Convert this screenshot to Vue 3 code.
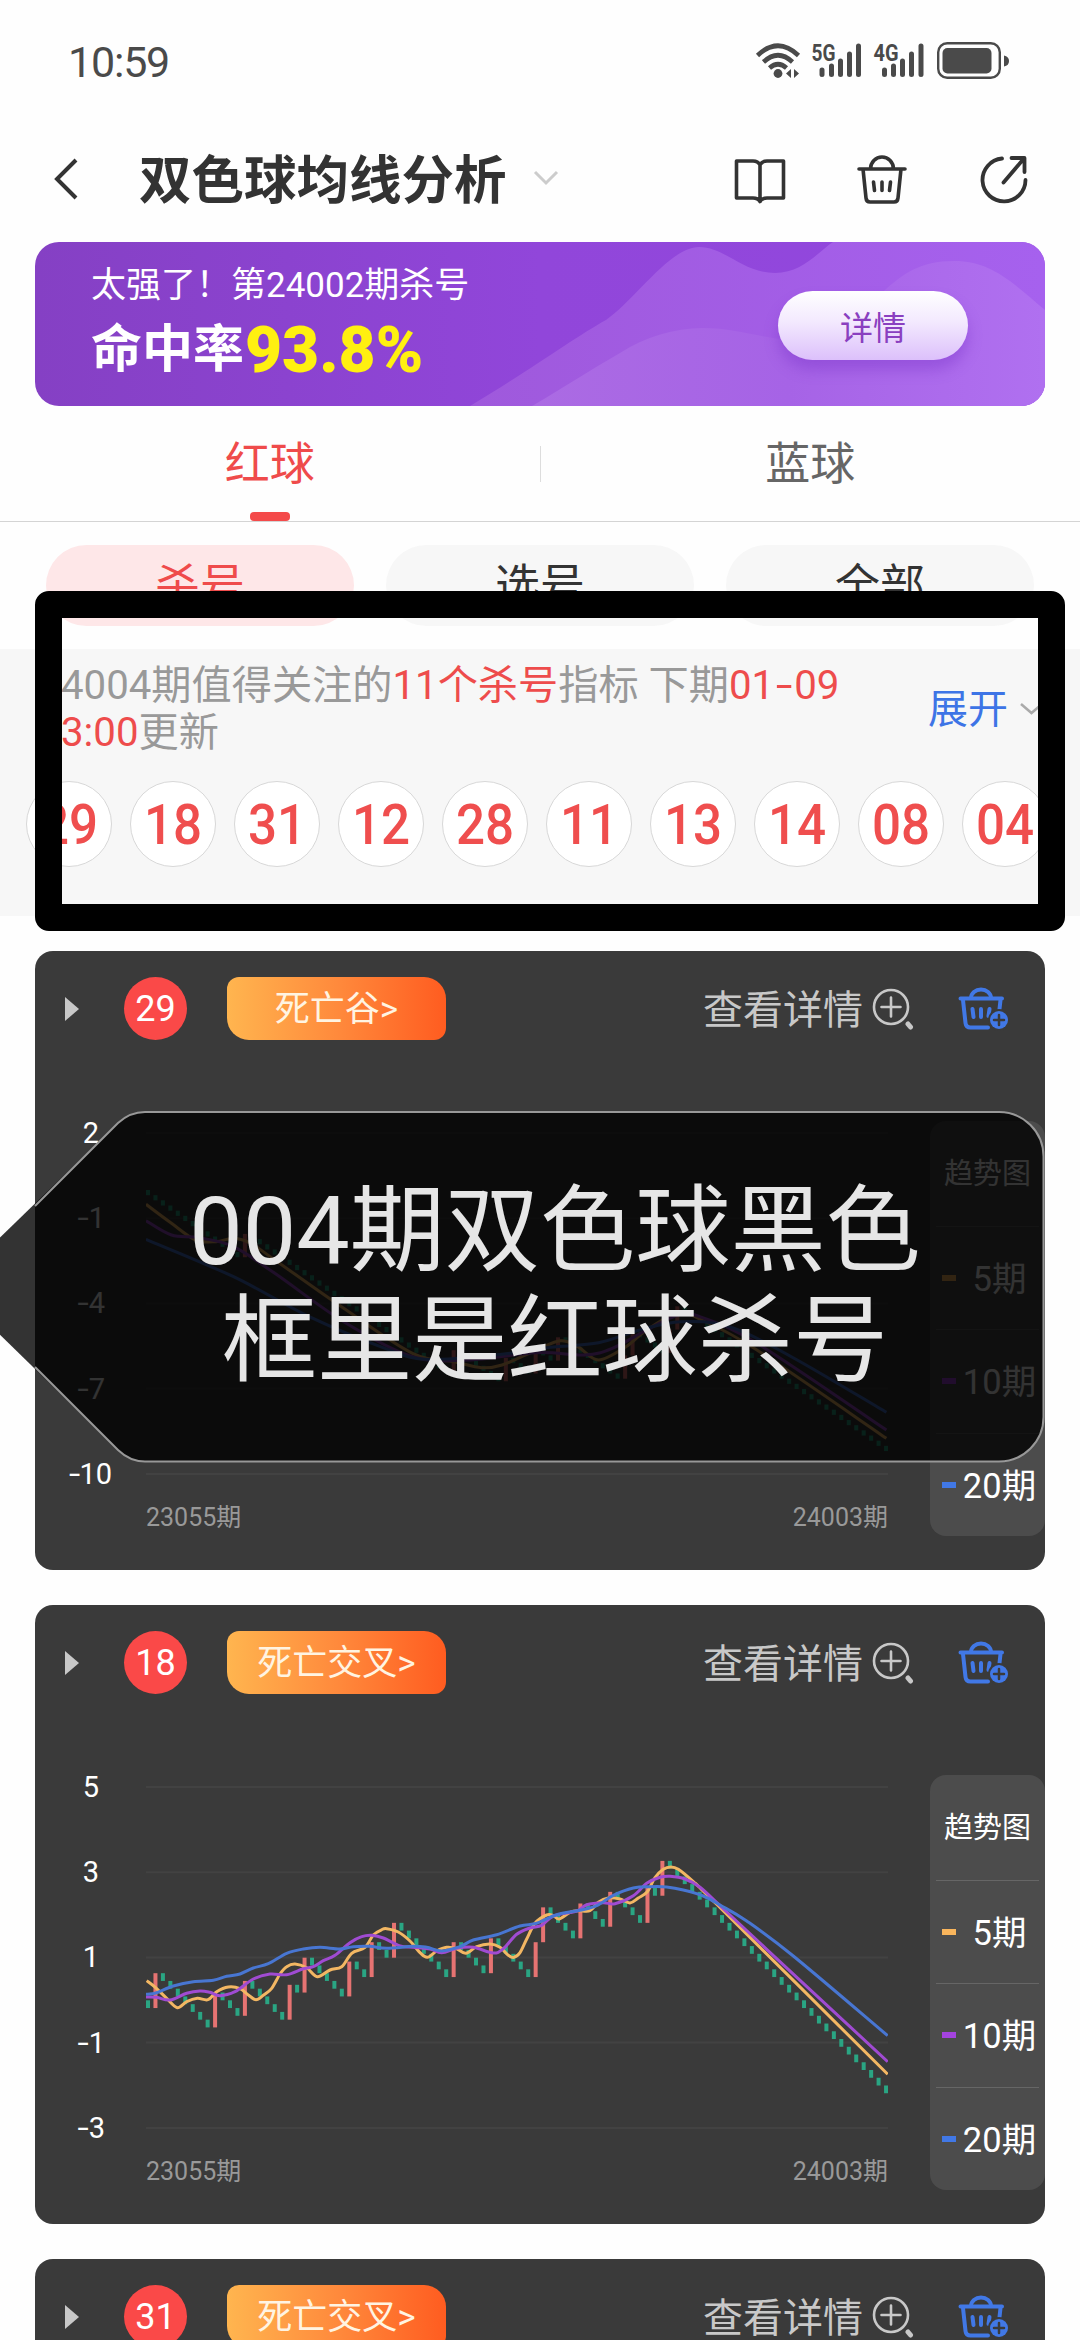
<script setup>
const balls = ['29', '18', '31', '12', '28', '11', '13', '14', '08', '04']

const MISS = 6 / 33
const HIT = 27 / 33
const STEP = 7.455

// Each draw is a bar: a hit climbs by 27/33 of a unit, a miss falls by 6/33.
function buildBars(hits, firstY, unit) {
  const bars = []
  let y = firstY
  for (let i = 0; i < 100; i++) {
    const up = hits.includes(i)
    const h = (up ? HIT : MISS) * unit
    bars.push({ x: i * STEP, y: up ? y - h : y, h, up })
    y += up ? -h : h
  }
  return bars
}

// Catmull-Rom spline through the points
function curve(pts) {
  let d = `M${pts[0][0].toFixed(1)} ${pts[0][1].toFixed(1)}`
  for (let i = 0; i < pts.length - 1; i++) {
    const a = pts[i - 1] || pts[i]
    const b = pts[i]
    const c = pts[i + 1]
    const e = pts[i + 2] || c
    const p = [b[0] + (c[0] - a[0]) / 6, b[1] + (c[1] - a[1]) / 6, c[0] - (e[0] - b[0]) / 6, c[1] - (e[1] - b[1]) / 6, c[0], c[1]]
    d += `C${p.map((n) => n.toFixed(1)).join(' ')}`
  }
  return d
}

const fine = (s) => curve(s.split(' ').map((p) => p.split(',').map(Number)).map(([x, y]) => [(x - 78) / 3, (y - 141) / 3]))
const coarse = (s) => curve(s.split(' ').map((p) => p.split(',').map(Number)).map(([x, y]) => [(x - 213) / 1.452, y / 3 - 33]))

const valley = {
  bars: buildBars([13, 41, 48, 52, 55, 64, 65, 70, 71], 57, 28.43),
  ma5: coarse('213,313 250,370 285,420 315,425 340,415 365,430 400,480 500,625 600,760 660,785 700,803 730,795 780,750 815,722 840,740 870,780 910,740 940,690 985,640 1020,660 1100,750 1288,1015'),
  ma10: coarse('213,362 250,405 290,413 340,440 400,520 500,665 600,770 680,780 780,758 850,765 890,745 940,690 985,645 1010,645 1100,730 1288,990'),
  ma20: coarse('213,418 340,530 450,650 560,745 620,778 720,765 800,742 870,728 930,690 990,665 1060,680 1150,770 1288,937'),
}
const cross = {
  bars: buildBars([1, 9, 13, 19, 21, 27, 30, 33, 41, 46, 52, 53, 58, 62, 67, 69], 213.3, 42.6),
  ma5: fine('80,722 106,742 140,775 172,803 200,785 232,775 264,779 290,755 325,741 360,746 385,765 408,779 430,766 455,745 480,702 500,680 525,672 560,683 592,710 630,690 665,680 695,640 735,622 760,585 785,569 800,566 835,576 870,603 900,638 922,652 950,633 980,622 1010,626 1038,640 1070,620 1110,612 1140,622 1165,646 1182,652 1200,638 1220,597 1245,550 1280,525 1300,527 1318,537 1350,517 1375,512 1410,512 1435,487 1465,474 1500,477 1530,489 1555,474 1582,455 1605,413 1630,388 1652,381 1675,388 1720,425 1790,493 2303,1003'),
  ma10: fine('78,771 110,772 150,780 200,760 240,753 270,757 300,767 345,755 400,717 450,702 500,704 550,686 580,680 610,662 645,646 690,608 725,590 755,586 790,594 840,618 880,622 930,627 965,638 1010,625 1060,622 1120,639 1150,626 1190,583 1230,564 1265,556 1300,528 1370,513 1400,494 1450,488 1485,491 1540,467 1580,430 1620,412 1650,409 1695,417 1740,442 1800,497 1940,628 2303,965'),
  ma20: fine('78,763 110,758 160,738 220,725 280,721 320,709 360,702 400,684 445,671 500,640 550,627 600,622 660,627 700,620 750,619 800,625 880,619 920,622 965,633 1020,620 1060,600 1130,584 1200,558 1250,550 1310,524 1380,511 1430,497 1480,466 1540,444 1590,440 1640,441 1690,450 1750,468 1800,495 1880,543 2020,648 2303,887'),
}

const cards = [
  { no: '29', tag: '死亡谷>', axis: ['2', '-1', '-4', '-7', '-10'], chart: valley },
  { no: '18', tag: '死亡交叉>', axis: ['5', '3', '1', '-1', '-3'], chart: cross },
  { no: '31', tag: '死亡交叉>', axis: [], chart: null },
]
const legend = [
  { label: '5期', color: '#f9b55c' },
  { label: '10期', color: '#a443e0' },
  { label: '20期', color: '#4178e6' },
]
const gridY = [0, 85.2, 170.4, 255.6, 341]
</script>

<template>
  <div class="page">
    <div class="status">
      <span class="clock">10:59</span>
      <svg class="status-icons" width="256" height="40" viewBox="755 41 256 40">
        <g fill="none" stroke="#4a4a4a" stroke-width="4.6">
          <path d="M757.500 55.500Q778 36 798.500 55.500" />
          <path d="M763.500 62Q778 48.500 792.500 62" />
          <path d="M769.500 68Q778 60.500 786.500 68" />
        </g>
        <circle cx="778" cy="73.500" r="4.400" fill="#4a4a4a" />
        <path d="M791 69v9l-5-4.500zM794 69v9l5-4.500z" fill="#4a4a4a" />
        <text class="net" x="811.500" y="60.500" textLength="24" lengthAdjust="spacingAndGlyphs">5G</text>
        <text class="net" x="873.500" y="60.500" textLength="25" lengthAdjust="spacingAndGlyphs">4G</text>
        <g stroke="#4a4a4a" stroke-width="5" stroke-linecap="round">
          <path d="M822 70v4.500M831.500 66v8.500M840.500 61v13.500M849.500 54v20.500M858.500 46v28.500" />
          <path d="M884.500 70v4.500M893.500 66v8.500M902.500 61v13.500M911.500 54v20.500M921 46v28.500" />
        </g>
        <rect x="938.200" y="43.200" width="61.600" height="34.600" rx="9" fill="none" stroke="#4a4a4a" stroke-width="2.400" />
        <rect x="942.500" y="48" width="49" height="25.500" rx="5" fill="#4a4a4a" />
        <path d="M1004 55.500q5 1 5 5.500t-5 5.500z" fill="#4a4a4a" />
      </svg>
    </div>

    <header class="nav">
      <svg class="back" width="26" height="44" viewBox="0 0 26 44"><path d="M23 3L4 22l19 19" fill="none" stroke="#333" stroke-width="4" /></svg>
      <h1>双色球均线分析</h1>
      <svg class="caret" width="26" height="16" viewBox="0 0 26 16"><path d="M2 2l11 11L24 2" fill="none" stroke="#ccc" stroke-width="3" /></svg>
      <div class="nav-icons">
        <svg width="52" height="50" viewBox="0 0 52 50" fill="none" stroke="#333" stroke-width="3.600" stroke-linejoin="round">
          <path d="M26 11Q24 7 19 7H2.500v37H19q5 0 7 3.500Q28 44 33 44h16.500V7H33q-5 0-7 4zV46" />
        </svg>
        <svg width="52" height="50" viewBox="0 0 52 50" fill="none" stroke="#333" stroke-width="3.600" stroke-linecap="round" stroke-linejoin="round">
          <path d="M3 15h46M14.500 15a11.500 12 0 0 1 23 0M7 15l3 29q.4 4 4 4h24q3.600 0 4-4l3-29M17.500 28l1 8.500M26 28v8.500M34.500 28l-1 8.500" />
        </svg>
        <svg width="52" height="50" viewBox="0 0 52 50" fill="none" stroke="#333" stroke-width="3.800" stroke-linecap="round" stroke-linejoin="round">
          <path d="M24 4.500A21.500 21.500 0 1 0 47.500 26M25.500 28.500L45.500 5M33.500 4H46.500V18" />
        </svg>
      </div>
    </header>

    <section class="banner">
      <svg class="waves" width="1010" height="164" viewBox="0 0 1010 164">
        <defs>
          <linearGradient id="w1" x1="0" x2="1"><stop offset="0" stop-color="#9f59dc" /><stop offset="1" stop-color="#a661ee" /></linearGradient>
          <linearGradient id="w2" x1="0" x2="1"><stop offset="0" stop-color="#ab6be3" /><stop offset=".5" stop-color="#a663e6" /><stop offset="1" stop-color="#b070f0" /></linearGradient>
        </defs>
        <path d="M435 164C500 125 540 95 571 78C600 58 635 5 664 5C690 5 708 31 740 31C768 31 785 8 798 0H1010V164Z" fill="url(#w1)" />
        <path d="M497 164C530 145 555 128 585 111C610 95 640 86 667 86C705 86 730 98 760 98C800 98 820 70 850 48C868 32 885 19 919 19C955 19 975 38 1010 68V164Z" fill="url(#w2)" />
      </svg>
      <div class="slogan">
        <p class="line1">太强了！第24002期杀号</p>
        <p class="line2"><span>命中率</span><b>93.8%</b></p>
      </div>
      <button class="detail">详情</button>
    </section>

    <nav class="tabs">
      <div class="tab active">红球<i></i></div>
      <span class="split"></span>
      <div class="tab">蓝球</div>
    </nav>

    <div class="pills">
      <span class="pill on">杀号</span>
      <span class="pill">选号</span>
      <span class="pill">全部</span>
    </div>

    <section class="picks">
      <div class="notice">
        <p>4004期值得关注的<em>11个杀号</em>指标 下期<em>01<span class="dash">-</span>09</em><br /><em>3:00</em>更新</p>
        <span class="expand">展开</span>
        <svg width="24" height="14" viewBox="0 0 24 14"><path d="M1 2l10.500 9L22 2" fill="none" stroke="#aaa" stroke-width="2.500" /></svg>
      </div>
      <div class="balls">
        <span v-for="b in balls" :key="b" class="ball"><b>{{ b }}</b></span>
      </div>
    </section>

    <article v-for="card in cards" :key="card.no" class="card">
      <div class="card-head">
        <svg class="play" width="14" height="24" viewBox="0 0 14 24"><path d="M0 0l14 12L0 24z" fill="#c8c8c8" /></svg>
        <span class="num">{{ card.no }}</span>
        <span class="tag">{{ card.tag }}</span>
        <span class="more">查看详情</span>
        <svg class="mag" width="42" height="44" viewBox="0 0 42 44" fill="none" stroke="#c8c8c8" stroke-width="2.600" stroke-linecap="round">
          <circle cx="19" cy="20" r="17" /><path d="M19 10.500v19M9.500 20h19" /><path d="M36 37l2.500 3" stroke-width="5" />
        </svg>
        <svg class="cart" width="52" height="44" viewBox="0 0 52 44" fill="none" stroke="#4178e6" stroke-width="4" stroke-linecap="round" stroke-linejoin="round">
          <path d="M2.500 11.500H44M13 11a10 8.500 0 0 1 20 0M5 13l2.500 23q.5 4.500 5 4.500H30M42.500 13l-1 9M14.500 22l1 8M23 22v8M31.500 22l-1 7" />
          <circle cx="41" cy="33" r="11" fill="#3a3a3a" stroke="none" />
          <circle cx="41" cy="33" r="9" fill="#4178e6" stroke="none" />
          <path d="M41 28v10M36 33h10" stroke="#3a3a3a" stroke-width="2.500" />
        </svg>
      </div>
      <div v-if="card.chart" class="card-body">
        <div class="axis"><span v-for="a in card.axis" :key="a"><u v-if="a[0] === '-'">-</u>{{ a.replace('-', '') }}</span></div>
        <div class="plot">
          <svg width="742" height="344" viewBox="0 -1 742 344">
            <path v-for="y in gridY" :key="y" :d="`M0 ${y}H742`" stroke="#424242" stroke-width="2" />
            <rect v-for="bar in card.chart.bars" :key="bar.x" :x="bar.x" :y="bar.y" width="4" :height="bar.h" :fill="bar.up ? '#e67372' : '#2aa583'" />
            <g fill="none" stroke-width="3">
              <path :d="card.chart.ma5" stroke="#f3b763" />
              <path :d="card.chart.ma10" stroke="#a04bd2" />
              <path :d="card.chart.ma20" stroke="#4876d2" />
            </g>
          </svg>
          <div class="range"><span>23055期</span><span>24003期</span></div>
        </div>
        <div class="legend">
          <div class="row title">趋势图</div>
          <div v-for="l in legend" :key="l.label" class="row"><i :style="{ background: l.color }"></i><span>{{ l.label }}</span></div>
        </div>
      </div>
    </article>

    <div class="frame"></div>

    <div class="callout">
      <svg width="1080" height="360" viewBox="0 1107 1080 360">
        <path d="M-50 1286L118 1123Q130 1112 145 1112H999A44.500 44.500 0 0 1 1043.500 1156.500V1417A44.500 44.500 0 0 1 999 1461.500H145Q130 1461.500 118 1450Z" fill="#000" fill-opacity=".8" />
        <path d="M35 1206L118 1123Q130 1112 145 1112H999A44.500 44.500 0 0 1 1043.500 1156.500V1417A44.500 44.500 0 0 1 999 1461.500H145Q130 1461.500 118 1450L35 1367" fill="none" stroke="#989898" stroke-width="2" />
      </svg>
      <p>004期双色球黑色<br />框里是红球杀号</p>
    </div>
  </div>
</template>

<style>
body {
  margin: 0;
  background: #fff;
}
</style>

<style scoped>
.page {
  position: relative;
  width: 1080px;
  height: 2340px;
  overflow: hidden;
  background: #fefefe;
  font-family: Roboto, 'Noto Sans CJK SC', sans-serif;
  color: #333;
}
p, h1 { margin: 0; }
em, i { font-style: normal; }

.status {
  display: flex;
  justify-content: space-between;
  align-items: center;
  height: 122px;
  padding: 0 69px 0 68px;
  box-sizing: border-box;
}
.clock { font-size: 43px; line-height: 50px; color: #4a4a4a; letter-spacing: -1.2px; padding-top: 2px; }
.net { font: 700 23px Roboto, sans-serif; fill: #4a4a4a; }

.nav { display: flex; align-items: center; height: 114px; padding: 0 50px 0 53px; }
.nav h1 { margin-left: 60px; padding-top: 4px; font-size: 52.500px; line-height: 70px; font-weight: 700; white-space: nowrap; }
.caret { margin: 0 0 2px 26px; }
.nav-icons { display: flex; gap: 70px; margin-left: auto; }

.banner {
  position: relative;
  display: flex;
  justify-content: space-between;
  height: 164px;
  margin: 6px 35px 0;
  border-radius: 24px;
  overflow: hidden;
  background: linear-gradient(90deg, #8540c4, #9146da 50%, #9248de);
  color: #fff;
}
.waves { position: absolute; left: 0; top: 0; }
.slogan { position: relative; padding: 19px 0 0 56px; }
.line1 { font-size: 35px; line-height: 50px; white-space: nowrap; }
.line2 { display: flex; align-items: center; height: 80px; font-size: 51px; font-weight: 700; }
.line2 span { line-height: 74px; padding-bottom: 3px; }
.line2 b { margin-left: 1px; font-size: 64px; line-height: 74px; color: #fff010; }
.detail {
  position: relative;
  width: 190px;
  height: 69px;
  margin: 49px 77px 0 0;
  padding: 0;
  border: 0;
  border-radius: 35px;
  background: linear-gradient(180deg, #fff, #f3e9fe 45%, #dcc0fb);
  box-shadow: 0 10px 14px rgba(120, 50, 200, 0.4);
  font: 400 33px/71px 'Noto Sans CJK SC', sans-serif;
  color: #8a3fc0;
}

.tabs { display: flex; align-items: center; height: 115px; border-bottom: 1px solid #d4d4d4; }
.tab { position: relative; flex: 1; text-align: center; font-size: 45px; line-height: 118px; height: 115px; color: #666; }
.tab.active { color: #ef4b4b; }
.tab i { position: absolute; left: 50%; bottom: 0; width: 40px; height: 9px; margin-left: -20px; border-radius: 4px; background: #f44a4a; }
.split { width: 1px; height: 36px; background: #ddd; }

.pills { display: flex; gap: 32px; padding: 23px 46px; }
.pill { flex: 1; height: 81px; border-radius: 41px; background: #f7f7f7; text-align: center; font-size: 45px; line-height: 84px; }
.pill.on { background: #fee7e8; color: #ef4b4b; }

.picks { height: 267px; background: #f7f7f7; box-sizing: border-box; padding-top: 13px; }
.notice { display: flex; align-items: center; height: 94px; padding: 0 36px 0 61px; font-size: 40.200px; line-height: 47px; color: #999; white-space: nowrap; }
.notice em { color: #ee4c4c; }
.dash { display: inline-block; width: 20px; text-align: center; transform: scaleX(1.5); }
.expand { margin-left: auto; color: #3d74e6; font-size: 40px; }
.notice svg { margin-left: 12px; }
.balls { display: flex; gap: 18px; margin: 25px 0 0 26px; }
.ball { flex: none; width: 86px; height: 86px; box-sizing: border-box; border: 1px solid #d8d8d8; border-radius: 50%; background: #fff; text-align: center; }
.ball b { display: block; font-size: 55px; line-height: 87px; font-weight: 500; color: #ef4e4e; transform: scaleX(0.93); }

.card { height: 619px; margin: 35px 35px 0; border-radius: 18px; background: #3a3a3a; overflow: hidden; }
.card-head { display: flex; align-items: center; height: 63px; padding: 26px 37px 0 30px; }
.num { width: 63px; height: 63px; margin-left: 45px; border-radius: 50%; background: #fa4948; color: #fff; text-align: center; font-size: 36px; line-height: 65px; }
.tag {
  width: 219px;
  height: 63px;
  margin-left: 40px;
  border-radius: 12px 22px;
  background: linear-gradient(90deg, #ffb54f, #ff8a3c 50%, #ff5c20);
  color: #fff4e2;
  text-align: center;
  font-size: 35px;
  line-height: 66px;
}
.more { margin-left: auto; padding-top: 4px; font-size: 40px; line-height: 60px; color: #c8c8c8; }
.mag { margin-left: 9px; }
.cart { margin-left: 44px; margin-right: -2px; }

.card-body { display: flex; height: 449px; padding-top: 81px; }
.axis { width: 42px; margin: -5px 0 0 35px; display: flex; flex-direction: column; }
.axis span { display: flex; justify-content: center; height: 85.200px; line-height: 34px; font-size: 29px; color: #fff; white-space: nowrap; }
.axis u { width: 12px; text-align: center; text-decoration: none; transform: scaleX(1.4); }
.plot { width: 742px; margin: 11px 0 0 34px; }
.plot svg { display: block; }
.range { display: flex; justify-content: space-between; margin-top: 24px; font-size: 25px; line-height: 36px; color: #999; }
.legend { width: 115px; height: 415px; margin-left: 42px; border-radius: 16px; background: #4c4c4c; color: #fff; display: flex; flex-direction: column; }
.row { display: flex; align-items: center; flex: 1; margin: 0 6px; font-size: 34.500px; line-height: 40px; white-space: nowrap; }
.row + .row { border-top: 1px solid #666; }
.row.title { justify-content: center; padding-top: 2px; font-size: 29px; }
.row i { flex: none; width: 14px; height: 6px; margin-left: 6px; }
.row span { flex: 1; text-align: center; margin: 2px -2px 0 2px; }

.frame { position: absolute; left: 35px; top: 591px; width: 1030px; height: 340px; box-sizing: border-box; border: 27px solid #000; border-radius: 14px; }
.callout { position: absolute; left: 0; top: 1107px; width: 1080px; height: 360px; }
.callout svg { display: block; }
.callout p { position: absolute; left: 0; top: 70px; width: 1110px; text-align: center; font-size: 95.200px; line-height: 110px; color: #e6e6e6; white-space: nowrap; }
</style>
